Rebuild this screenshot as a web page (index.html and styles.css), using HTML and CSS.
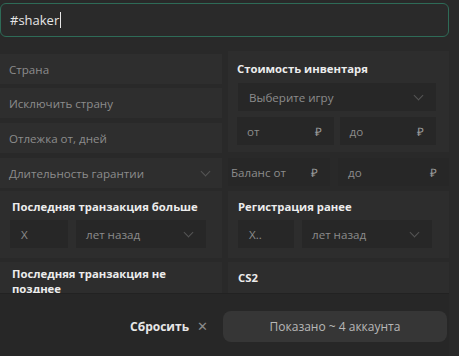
FILE: index.html
```html
<!DOCTYPE html>
<html lang="ru">
<head>
  <meta charset="UTF-8" />
  <title>Фильтры</title>
  <link rel="stylesheet" href="styles.css">
</head>
<body>
  <div class="page">
    <div class="search">
      <span class="search-text">#shaker</span><span class="caret"></span>
    </div>

    <div class="filters">
      <div class="top">
        <div class="col">
          <div class="field">Страна</div>
          <div class="field">Исключить страну</div>
          <div class="field">Отлежка от, дней</div>
          <div class="field select">Длительность гарантии <span class="chev"></span></div>
        </div>
        <div class="col">
          <div class="card price">
            <div class="title">Стоимость инвентаря</div>
            <div class="inner select">Выберите игру <span class="chev"></span></div>
            <div class="pair">
              <div class="inner money">от <span class="rub">₽</span></div>
              <div class="inner money">до <span class="rub">₽</span></div>
            </div>
          </div>
          <div class="pair balance">
            <div class="inner money">Баланс от <span class="rub">₽</span></div>
            <div class="inner money wide">до <span class="rub">₽</span></div>
          </div>
        </div>
      </div>

      <div class="cards">
        <div class="card">
          <div class="title">Последняя транзакция больше</div>
          <div class="pair">
            <div class="inner num">X</div>
            <div class="inner select years">лет назад <span class="chev"></span></div>
          </div>
        </div>
        <div class="card">
          <div class="title">Регистрация ранее</div>
          <div class="pair">
            <div class="inner num">X..</div>
            <div class="inner select years">лет назад <span class="chev"></span></div>
          </div>
        </div>
        <div class="card tall">
          <div class="title">Последняя транзакция не позднее</div>
        </div>
        <div class="card">
          <div class="title">CS2</div>
        </div>
      </div>
    </div>

    <div class="footer">
      <div class="reset">Сбросить <span class="x">✕</span></div>
      <div class="show">Показано ~ 4 аккаунта</div>
    </div>
  </div>
</body>
</html>
```

FILE: styles.css
```css
* { box-sizing: border-box; margin: 0; padding: 0; }

body {
  background: #292929;
  font-family: "Open Sans", sans-serif;
  font-size: 11.6px;
  color: #8c8c8c;
  width: 459px;
  height: 356px;
  overflow: hidden;
}

.page {
  width: 449px;
  height: 356px;
  display: flex;
  flex-direction: column;
}

.search {
  margin-top: 3px;
  height: 34px;
  border: 1px solid #2e6b57;
  border-radius: 6px;
  background: #2a2a2a;
  padding-left: 9px;
  display: flex;
  align-items: center;
  color: #e6e6e6;
  font-size: 13px;
}

.caret {
  display: inline-block;
  width: 1px;
  height: 16px;
  background: #e6e6e6;
  margin-left: 1px;
}

.filters {
  margin-top: 14px;
  height: 242px;
  overflow: hidden;
}

.top {
  display: grid;
  grid-template-columns: 222px 221px;
  gap: 6px;
}

.col {
  display: flex;
  flex-direction: column;
  gap: 4px;
}

.col .field:first-child {
  margin-top: 3px;
}

.field {
  height: 30px;
  background: #2e2e2e;
  padding: 0 9px;
  display: flex;
  align-items: center;
  justify-content: space-between;
}

.field:nth-child(3) {
  margin-top: 1px;
}

.field:nth-child(4) {
  margin-top: 1px;
}

.chev {
  width: 7px;
  height: 7px;
  border-right: 1.5px solid #555;
  border-bottom: 1.5px solid #555;
  transform: rotate(45deg);
  margin-right: 4px;
  margin-top: -4px;
}

.card {
  background: #2d2d2d;
  padding: 12px 12px 8px 10px;
}

.title {
  color: #ececec;
  font-weight: 700;
  font-size: 11.3px;
  line-height: 16px;
}

.price {
  padding: 10px 13px 6px 9px;
  height: 101px;
}

.inner {
  height: 28px;
  background: #272727;
  padding: 0 10px;
  display: flex;
  align-items: center;
  justify-content: space-between;
}

.price .select {
  margin-top: 6px;
  margin-left: 1px;
  padding-left: 11px;
}

.pair {
  display: flex;
  gap: 6px;
  margin-top: 6px;
}

.money {
  flex: 1;
}

.rub {
  color: #9a9a9a;
  margin-right: 2px;
}

.balance {
  margin-top: 2px;
  gap: 8px;
}

.balance .money {
  flex: 0 0 102px;
  padding-left: 3px;
}

.balance .wide {
  flex: 1;
  padding-left: 10px;
}

.cards {
  display: grid;
  grid-template-columns: 222px 221px;
  column-gap: 6px;
  row-gap: 4px;
  margin-top: 3px;
}

.cards .card {
  height: 67px;
  padding: 8px 12px 0 10px;
}

.cards .card:nth-child(odd) .title {
  margin-left: 2px;
}

.cards .card.tall {
  padding-top: 4px;
}

.cards .card.tall .title {
  line-height: 15px;
}

.cards .pair {
  gap: 8px;
  margin-top: 5px;
}

.num {
  flex: 0 0 58px;
  padding-left: 11px;
}

.years {
  flex: 0 0 130px;
  padding-left: 10px;
}

.cards .card:nth-child(even) .num {
  flex-basis: 56px;
}

.footer {
  flex: 1;
  border-top: 1px solid #222;
  background: #272727;
  display: flex;
  align-items: center;
  justify-content: flex-end;
  gap: 15px;
  padding-top: 2px;
  padding-right: 2px;
}

.reset {
  color: #e6e6e6;
  font-weight: 700;
  font-size: 12px;
  display: flex;
  align-items: center;
  gap: 8px;
}

.x {
  color: #8a8a8a;
  font-weight: 400;
  font-size: 13px;
}

.show {
  width: 224px;
  height: 31px;
  border-radius: 8px;
  background: #363636;
  color: #b8b8b8;
  font-size: 12px;
  display: flex;
  align-items: center;
  justify-content: center;
}
```
